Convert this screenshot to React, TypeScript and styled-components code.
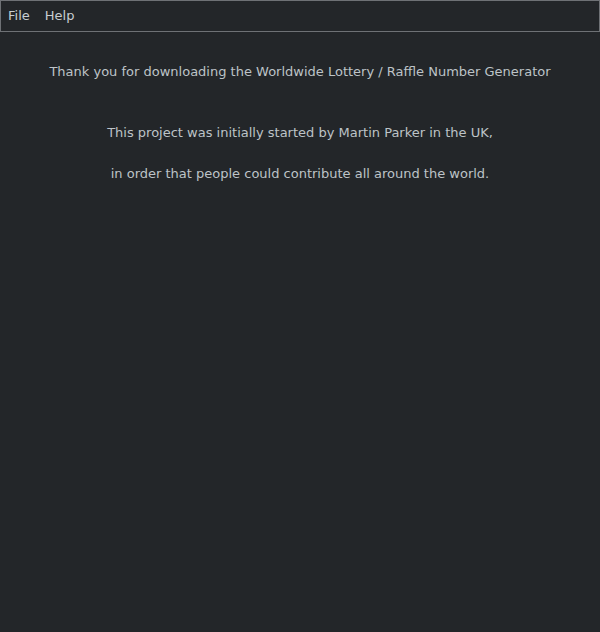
import React from "react";
import styled, { createGlobalStyle } from "styled-components";

const Global = createGlobalStyle`
  html, body { margin: 0; padding: 0; background: #232629; }
  body { font-family: "DejaVu Sans", sans-serif; font-size: 13px; color: #bdc3c7; }
`;

const Page = styled.div`
  width: 600px;
  height: 632px;
  background: #232629;
  display: flex;
  flex-direction: column;
`;

const MenuBar = styled.div`
  height: 29px;
  padding: 0 0 1px 7px;
  border: 1px solid #6e7175;
  box-sizing: content-box;
  display: flex;
  align-items: center;
  gap: 15px;
  background: #232629;
`;

const MenuItem = styled.span`
  color: #c8cdd1;
  font-size: 13px;
`;

const Content = styled.div`
  display: flex;
  flex-direction: column;
  align-items: center;
  padding-top: 32px;
`;

const Line = styled.p<{ $gap: number }>`
  margin: ${(p) => p.$gap}px 0 0 0;
  line-height: 16px;
  color: #bdc3c7;
  text-align: center;
`;

export default function App() {
  return (
    <Page>
      <Global />
      <MenuBar>
        <MenuItem>File</MenuItem>
        <MenuItem>Help</MenuItem>
      </MenuBar>
      <Content>
        <Line $gap={0}>Thank you for downloading the Worldwide Lottery / Raffle Number Generator</Line>
        <Line $gap={45}>This project was initially started by Martin Parker in the UK,</Line>
        <Line $gap={25}>in order that people could contribute all around the world.</Line>
      </Content>
    </Page>
  );
}
